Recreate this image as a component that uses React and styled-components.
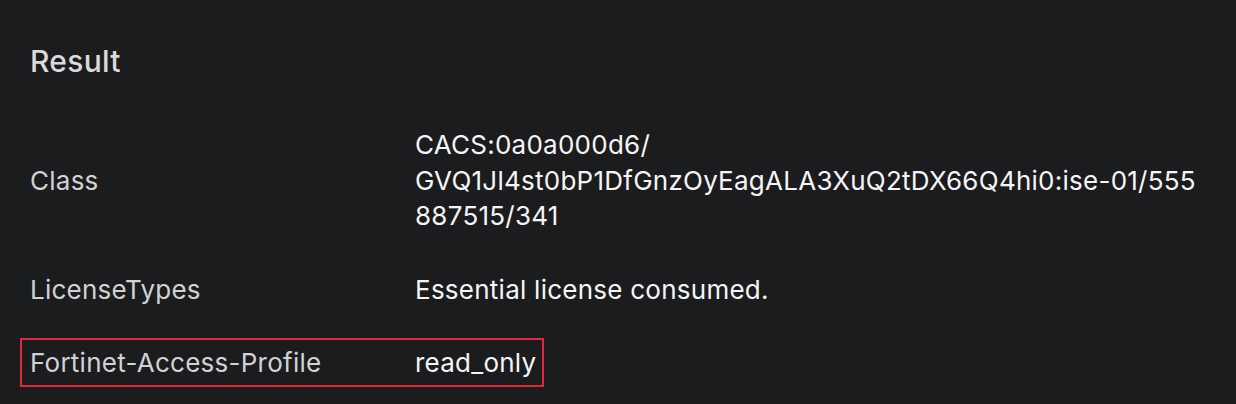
import React from "react";
import styled, { createGlobalStyle } from "styled-components";

const GlobalStyle = createGlobalStyle`
  html, body {
    margin: 0;
    padding: 0;
    background: #1b1c1e;
  }
  body {
    font-family: Inter, "Noto Sans", sans-serif;
    -webkit-font-smoothing: antialiased;
  }
`;

const rows = [
  {
    label: "Class",
    value:
      "CACS:0a0a000d6/\nGVQ1Jl4st0bP1DfGnzOyEagALA3XuQ2tDX66Q4hi0:ise-01/555887515/341",
  },
  { label: "LicenseTypes", value: "Essential license consumed." },
  { label: "Fortinet-Access-Profile", value: "read_only", highlight: true },
];

export default function App() {
  return (
    <>
      <GlobalStyle />
      <Panel>
        <Title>Result</Title>
        <List>
          {rows.map((r) => (
            <Row key={r.label} $highlight={r.highlight}>
              <Label>{r.label}</Label>
              <Value>{r.value}</Value>
            </Row>
          ))}
        </List>
      </Panel>
    </>
  );
}

const Panel = styled.section`
  width: 1236px;
  height: 404px;
  box-sizing: border-box;
  padding: 44px 30px 0 30px;
  overflow: hidden;
`;

const Title = styled.h2`
  margin: 0;
  font-size: 30px;
  font-weight: 500;
  line-height: 34px;
  color: #dadada;
  letter-spacing: 0.3px;
`;

const List = styled.div`
  display: flex;
  flex-direction: column;
  align-items: flex-start;
  gap: 38px;
  margin-top: 49px;
`;

const Row = styled.div`
  display: grid;
  grid-template-columns: 385px 795px;
  align-items: center;
  font-size: 26px;
  line-height: 35.5px;
  letter-spacing: 0.25px;
  ${(p) =>
    p.$highlight &&
    `
    grid-template-columns: 385px auto;
    margin: -7px 0 0 -10px;
    padding: 5px 6px 4px 8px;
    border: 2px solid #e3283b;
  `}
`;

const Label = styled.div`
  color: #d2d2d2;
`;

const Value = styled.div`
  color: #f5f5f5;
  white-space: pre-line;
  word-break: break-all;
`;
